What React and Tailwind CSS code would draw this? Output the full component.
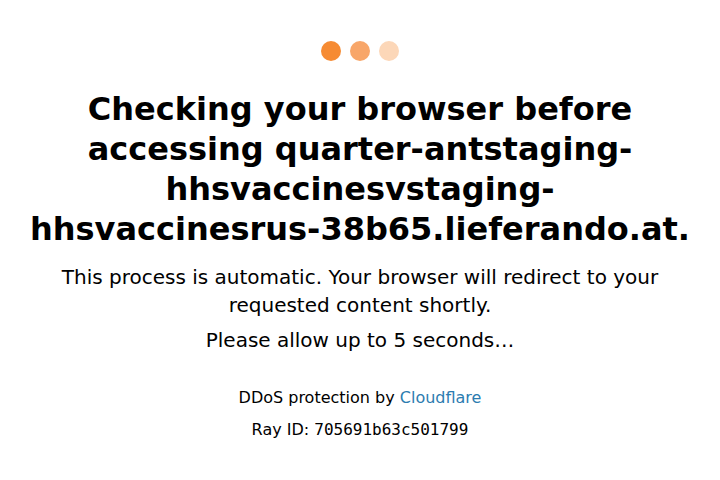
export default function App() {
  return (
    <div className="w-[720px] h-[480px] bg-white flex flex-col items-center text-center text-black" style={{ fontFamily: '"DejaVu Sans", sans-serif' }}>
      <div className="flex gap-[9px] mt-[41px]">
        <div className="w-5 h-5 rounded-full bg-[#f68b33]" />
        <div className="w-5 h-5 rounded-full bg-[#f8a669]" />
        <div className="w-5 h-5 rounded-full bg-[#fcd7b8]" />
      </div>
      <h1 className="mt-[28px] text-[32px] leading-[40px] font-bold w-[670px]">
        Checking your browser before accessing quarter-antstaging-hhsvaccinesvstaging-hhsvaccinesrus-38b65.lieferando.at.
      </h1>
      <p className="mt-[14px] text-[20px] leading-[28px] w-[640px]">
        This process is automatic. Your browser will redirect to your requested content shortly.
      </p>
      <p className="mt-[7px] text-[20px] leading-[28px]">Please allow up to 5 seconds…</p>
      <p className="mt-[33px] text-[16px] leading-[22px]">
        DDoS protection by <span className="text-[#2c7cb0]">Cloudflare</span>
      </p>
      <p className="mt-[10px] text-[16px] leading-[22px]">
        Ray ID: <code style={{ fontFamily: '"DejaVu Sans Mono", monospace' }}>705691b63c501799</code>
      </p>
    </div>
  );
}
